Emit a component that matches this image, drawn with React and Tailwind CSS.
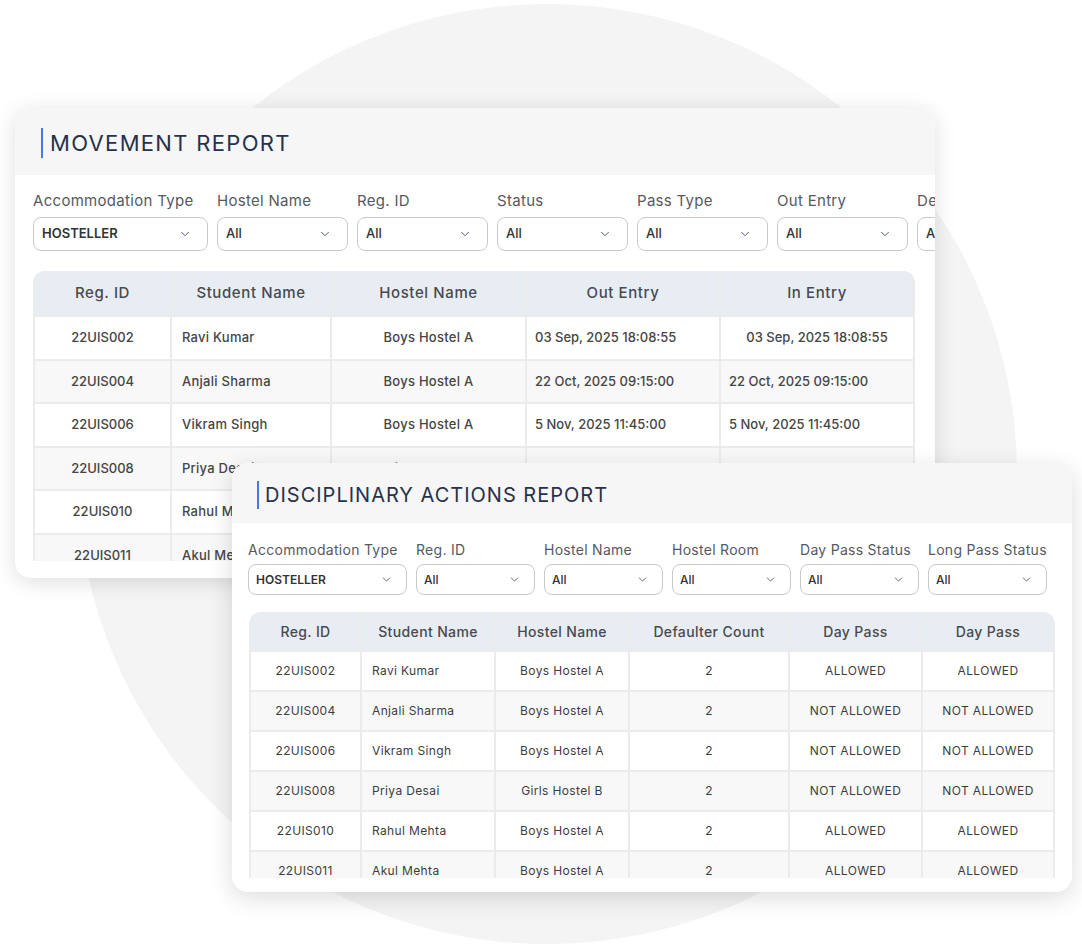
import { ChevronDown } from 'lucide-react'

const movementFilters = [
  { label: 'Accommodation Type', value: 'HOSTELLER', w: 'w-[175px]' },
  { label: 'Hostel Name', value: 'All', w: 'w-[131px]' },
  { label: 'Reg. ID', value: 'All', w: 'w-[131px]' },
  { label: 'Status', value: 'All', w: 'w-[131px]' },
  { label: 'Pass Type', value: 'All', w: 'w-[131px]' },
  { label: 'Out Entry', value: 'All', w: 'w-[131px]' },
  { label: 'Departure', value: 'All', w: 'w-[131px]' },
]

const movementRows = [
  ['22UIS002', 'Ravi Kumar', 'Boys Hostel A', '03 Sep, 2025 18:08:55', '03 Sep, 2025 18:08:55'],
  ['22UIS004', 'Anjali Sharma', 'Boys Hostel A', '22 Oct, 2025 09:15:00', '22 Oct, 2025 09:15:00'],
  ['22UIS006', 'Vikram Singh', 'Boys Hostel A', '5 Nov, 2025 11:45:00', '5 Nov, 2025 11:45:00'],
  ['22UIS008', 'Priya Desai', 'Girls Hostel B', '30 Nov, 2025 20:30:00', '30 Nov, 2025 20:30:00'],
  ['22UIS010', 'Rahul Mehta', 'Boys Hostel A', '2 Dec, 2025 10:00:00', '2 Dec, 2025 10:00:00'],
  ['22UIS011', 'Akul Mehta', 'Boys Hostel A', '4 Dec, 2025 08:30:00', '4 Dec, 2025 08:30:00'],
]

const disciplineFilters = [
  { label: 'Accommodation Type', value: 'HOSTELLER', w: 'w-[159px]' },
  { label: 'Reg. ID', value: 'All', w: 'w-[119px]' },
  { label: 'Hostel Name', value: 'All', w: 'w-[119px]' },
  { label: 'Hostel Room', value: 'All', w: 'w-[119px]' },
  { label: 'Day Pass Status', value: 'All', w: 'w-[119px]' },
  { label: 'Long Pass Status', value: 'All', w: 'w-[119px]' },
]

const disciplineRows = [
  ['22UIS002', 'Ravi Kumar', 'Boys Hostel A', '2', 'ALLOWED', 'ALLOWED'],
  ['22UIS004', 'Anjali Sharma', 'Boys Hostel A', '2', 'NOT ALLOWED', 'NOT ALLOWED'],
  ['22UIS006', 'Vikram Singh', 'Boys Hostel A', '2', 'NOT ALLOWED', 'NOT ALLOWED'],
  ['22UIS008', 'Priya Desai', 'Girls Hostel B', '2', 'NOT ALLOWED', 'NOT ALLOWED'],
  ['22UIS010', 'Rahul Mehta', 'Boys Hostel A', '2', 'ALLOWED', 'ALLOWED'],
  ['22UIS011', 'Akul Mehta', 'Boys Hostel A', '2', 'ALLOWED', 'ALLOWED'],
]

function CardTitle({ children, big }) {
  return (
    <div className={`flex items-center shrink-0 bg-[#f6f6f7] ${big ? 'h-[67px] pl-[26px] pt-[3px]' : 'h-[60px] pl-[25px] pt-[4px]'}`}>
      <span className={`w-[2px] bg-[#3b7cf0] ${big ? 'h-[30px] mr-[7px]' : 'h-[28px] mr-[6px]'}`} />
      <h2 className={`text-[#27324a] ${big ? 'text-[22px] tracking-[0.06em]' : 'text-[20px] tracking-[0.05em]'}`}>{children}</h2>
    </div>
  )
}

function Filter({ label, value, w, big }) {
  return (
    <div className={`flex flex-col shrink-0 ${w}`}>
      <span
        className={`whitespace-nowrap text-[#555a62] tracking-[0.02em] ${
          big ? 'text-[15px] leading-[18px] mb-[7px]' : 'text-[14px] leading-[16px] mb-[6px]'
        }`}
      >
        {label}
      </span>
      <div
        className={`flex items-center justify-between border border-[#c9c9cc] rounded-lg bg-white ${
          big ? 'h-[34px] pl-[8px] pr-[15px]' : 'h-[31px] pl-[7px] pr-[13px]'
        }`}
      >
        <span className={`text-[#333] ${value === 'All' ? 'font-medium' : 'font-semibold'} ${big ? 'text-[13px]' : 'text-[12px]'}`}>
          {value}
        </span>
        <ChevronDown size={big ? 14 : 13} strokeWidth={1.5} className="text-[#3a4666]" />
      </div>
    </div>
  )
}

function MovementCard() {
  return (
    <div className="absolute left-[15px] top-[108px] w-[920px] h-[470px] bg-white rounded-2xl shadow-[0_4px_22px_rgba(0,0,0,0.13)] overflow-hidden flex flex-col">
      <CardTitle big>MOVEMENT REPORT</CardTitle>
      <div className="flex gap-[9px] pl-[18px] pt-[17px]">
        {movementFilters.map((f) => (
          <Filter key={f.label} {...f} big />
        ))}
      </div>

      <div className="ml-[18px] mt-[20px] w-[882px] h-[290px] overflow-hidden rounded-t-xl">
        <div className="grid grid-cols-[135px_158px_193px_192px_192px] gap-[2px] px-[2px] bg-[#ebebeb] text-[13px] text-[#454545] font-medium">
          {['Reg. ID', 'Student Name', 'Hostel Name', 'Out Entry', 'In Entry'].map((h) => (
            <div key={h} className="h-[44px] flex items-center justify-center bg-[#e8edf3] text-[15px] text-[#474a50] tracking-[0.04em]">
              {h}
            </div>
          ))}
          {movementRows.map((r, i) => {
            const bg = i % 2 ? 'bg-[#f8f8f8]' : 'bg-white'
            return [
              <div key={`${i}a`} className={`h-[41.5px] flex items-center justify-center ${bg}`}>{r[0]}</div>,
              <div key={`${i}b`} className={`h-[41.5px] flex items-center pl-[10px] tracking-[0.02em] ${bg}`}>{r[1]}</div>,
              <div key={`${i}c`} className={`h-[41.5px] flex items-center justify-center tracking-[0.02em] ${bg}`}>{r[2]}</div>,
              <div key={`${i}d`} className={`h-[41.5px] flex items-center pl-[8px] ${bg}`}>{r[3]}</div>,
              <div key={`${i}e`} className={`h-[41.5px] flex items-center ${i === 0 ? 'justify-center' : 'pl-[8px]'} ${bg}`}>{r[4]}</div>,
            ]
          })}
        </div>
      </div>
    </div>
  )
}

function DisciplineCard() {
  return (
    <div className="absolute left-[232px] top-[463px] w-[840px] h-[429px] bg-white rounded-2xl shadow-[0_6px_24px_rgba(0,0,0,0.14)] overflow-hidden flex flex-col">
      <CardTitle>DISCIPLINARY ACTIONS REPORT</CardTitle>
      <div className="flex gap-[9px] pl-[16px] pt-[19px]">
        {disciplineFilters.map((f) => (
          <Filter key={f.label} {...f} />
        ))}
      </div>

      <div className="ml-[17px] mt-[17px] w-[806px] h-[266px] overflow-hidden rounded-t-xl">
        <div className="grid grid-cols-[109px_132px_132px_158px_131px_130px] gap-[2px] px-[2px] bg-[#ebebeb] text-[12px] text-[#3d3d3d] tracking-[0.03em]">
          {['Reg. ID', 'Student Name', 'Hostel Name', 'Defaulter Count', 'Day Pass', 'Day Pass'].map((h, i) => (
            <div key={i} className="h-[38px] flex items-center justify-center bg-[#e8edf3] text-[14px] text-[#474a50] font-medium">
              {h}
            </div>
          ))}
          {disciplineRows.map((r, i) => {
            const bg = i % 2 ? 'bg-[#f8f8f8]' : 'bg-white'
            return r.map((c, j) => (
              <div
                key={`${i}-${j}`}
                className={`h-[38px] flex items-center ${j === 1 ? 'pl-[10px]' : 'justify-center'} ${bg}`}
              >
                {c}
              </div>
            ))
          })}
        </div>
      </div>
    </div>
  )
}

export default function App() {
  return (
    <div className="relative w-[1082px] h-[946px] overflow-hidden bg-white font-['Inter','Noto_Sans',sans-serif]">
      {/* backdrop circle */}
      <div className="absolute left-[77px] top-[4px] w-[940px] h-[940px] rounded-full bg-[#f4f4f5]" />
      <MovementCard />
      <DisciplineCard />
    </div>
  )
}
